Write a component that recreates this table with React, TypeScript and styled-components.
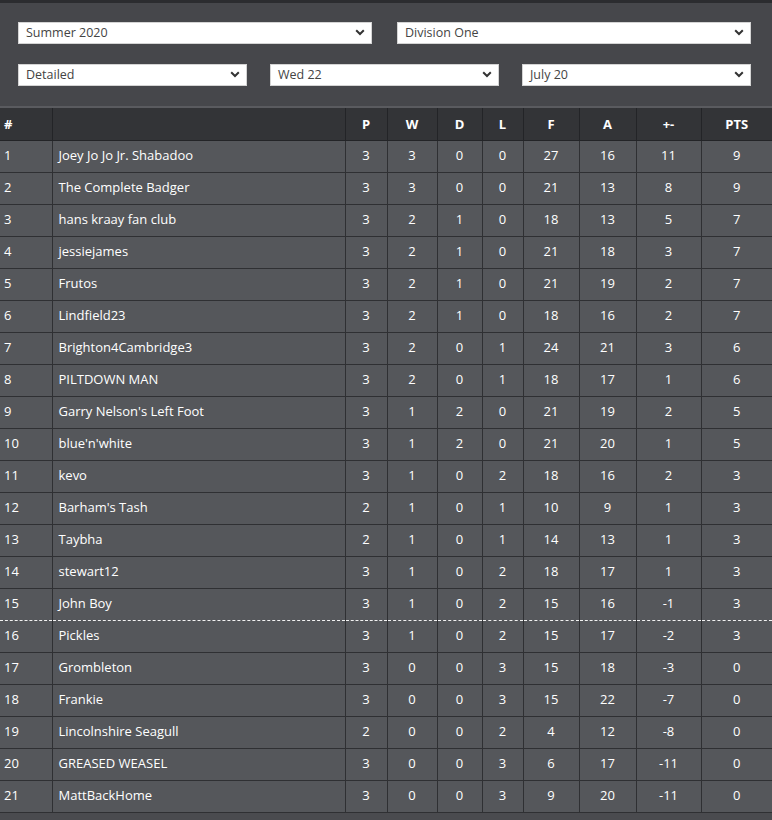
import { styled, createGlobalStyle } from "styled-components"

interface Team {
  name: string
  p: number
  w: number
  d: number
  l: number
  f: number
  a: number
}

const teams: Team[] = [
  { name: "Joey Jo Jo Jr. Shabadoo", p: 3, w: 3, d: 0, l: 0, f: 27, a: 16 },
  { name: "The Complete Badger", p: 3, w: 3, d: 0, l: 0, f: 21, a: 13 },
  { name: "hans kraay fan club", p: 3, w: 2, d: 1, l: 0, f: 18, a: 13 },
  { name: "jessiejames", p: 3, w: 2, d: 1, l: 0, f: 21, a: 18 },
  { name: "Frutos", p: 3, w: 2, d: 1, l: 0, f: 21, a: 19 },
  { name: "Lindfield23", p: 3, w: 2, d: 1, l: 0, f: 18, a: 16 },
  { name: "Brighton4Cambridge3", p: 3, w: 2, d: 0, l: 1, f: 24, a: 21 },
  { name: "PILTDOWN MAN", p: 3, w: 2, d: 0, l: 1, f: 18, a: 17 },
  { name: "Garry Nelson's Left Foot", p: 3, w: 1, d: 2, l: 0, f: 21, a: 19 },
  { name: "blue'n'white", p: 3, w: 1, d: 2, l: 0, f: 21, a: 20 },
  { name: "kevo", p: 3, w: 1, d: 0, l: 2, f: 18, a: 16 },
  { name: "Barham's Tash", p: 2, w: 1, d: 0, l: 1, f: 10, a: 9 },
  { name: "Taybha", p: 2, w: 1, d: 0, l: 1, f: 14, a: 13 },
  { name: "stewart12", p: 3, w: 1, d: 0, l: 2, f: 18, a: 17 },
  { name: "John Boy", p: 3, w: 1, d: 0, l: 2, f: 15, a: 16 },
  { name: "Pickles", p: 3, w: 1, d: 0, l: 2, f: 15, a: 17 },
  { name: "Grombleton", p: 3, w: 0, d: 0, l: 3, f: 15, a: 18 },
  { name: "Frankie", p: 3, w: 0, d: 0, l: 3, f: 15, a: 22 },
  { name: "Lincolnshire Seagull", p: 2, w: 0, d: 0, l: 2, f: 4, a: 12 },
  { name: "GREASED WEASEL", p: 3, w: 0, d: 0, l: 3, f: 6, a: 17 },
  { name: "MattBackHome", p: 3, w: 0, d: 0, l: 3, f: 9, a: 20 },
]

const colWidths = [52, 293, 42, 50, 45, 41, 56, 57, 65, 71]
const headers = ["#", "", "P", "W", "D", "L", "F", "A", "+-", "PTS"]

// promotion cut-off sits under this row index
const CUT_AFTER = 14

function Chevron() {
  return (
    <svg width="10" height="7" viewBox="0 0 10 7">
      <path d="M1.2 1.3 L5 5 L8.8 1.3" fill="none" stroke="#333" strokeWidth="2" />
    </svg>
  )
}

function SelectBox({ label }: { label: string }) {
  return (
    <Select>
      <span>{label}</span>
      <Chevron />
    </Select>
  )
}

export default function App() {
  return (
    <>
      <GlobalStyle />
      <Page>
        <Filters>
          <FilterRow cols={2}>
            <SelectBox label="Summer 2020" />
            <SelectBox label="Division One" />
          </FilterRow>
          <FilterRow cols={3}>
            <SelectBox label="Detailed" />
            <SelectBox label="Wed 22" />
            <SelectBox label="July 20" />
          </FilterRow>
        </Filters>

        <Table>
          <colgroup>
            {colWidths.map((w, i) => <col key={i} style={{ width: w }} />)}
          </colgroup>
          <thead>
            <tr>
              {headers.map((h, i) => <Th key={i} left={i < 2}>{h}</Th>)}
            </tr>
          </thead>
          <tbody>
            {teams.map((t, i) => {
              const diff = t.f - t.a
              const pts = t.w * 3 + t.d
              return (
                <Row key={t.name} cut={i === CUT_AFTER}>
                  <Td left>{i + 1}</Td>
                  <Td left name>{t.name}</Td>
                  <Td>{t.p}</Td>
                  <Td>{t.w}</Td>
                  <Td>{t.d}</Td>
                  <Td>{t.l}</Td>
                  <Td>{t.f}</Td>
                  <Td>{t.a}</Td>
                  <Td>{diff}</Td>
                  <Td>{pts}</Td>
                </Row>
              )
            })}
          </tbody>
        </Table>
      </Page>
    </>
  )
}

const GlobalStyle = createGlobalStyle`
  html, body {
    margin: 0;
    padding: 0;
    background: #4a4b4f;
  }
  body {
    font-family: "Open Sans", "Noto Sans", sans-serif;
  }
`

const Page = styled.div`
  width: 772px;
  border-top: 3px solid #2b2c2f;
`

const Filters = styled.div`
  background: #46474b;
  padding: 19px 21px 20px 18px;
  display: flex;
  flex-direction: column;
  gap: 20px;
  border-bottom: 2px solid #5a5b5f;
`

const FilterRow = styled.div<{ cols: number }>`
  display: grid;
  grid-template-columns: repeat(${p => p.cols}, 1fr);
  column-gap: ${p => (p.cols === 2 ? 25 : 23)}px;
`

const Select = styled.div`
  height: 22px;
  box-sizing: border-box;
  background: #fff;
  border: 1px solid #d4d4d4;
  display: flex;
  align-items: center;
  justify-content: space-between;
  padding: 0 6px 1px 7px;
  font-size: 12.5px;
  color: #444;
`

const Table = styled.table`
  width: 772px;
  table-layout: fixed;
  border-collapse: collapse;
  color: #fff;
  font-size: 13px;
`

const Th = styled.th<{ left?: boolean }>`
  background: #333437;
  height: 32px;
  box-sizing: border-box;
  padding: 0 4px;
  font-weight: 700;
  text-align: ${p => (p.left ? "left" : "center")};
  border-right: 1px solid #232427;
  border-bottom: 1px solid #232427;
  &:last-child { border-right: none; }
`

const Row = styled.tr<{ cut?: boolean }>`
  background: #55575b;
  ${p => p.cut && `
    td { border-bottom: 1px dashed #f2f2f2; }
  `}
`

const Td = styled.td<{ left?: boolean; name?: boolean }>`
  height: 32px;
  box-sizing: border-box;
  padding: 0 ${p => (p.name ? "6px" : "4px")} 2px;
  text-align: ${p => (p.left ? "left" : "center")};
  border-right: 1px solid #2f3033;
  border-bottom: 1px solid #2f3033;
  white-space: nowrap;
  &:last-child { border-right: none; }
`
